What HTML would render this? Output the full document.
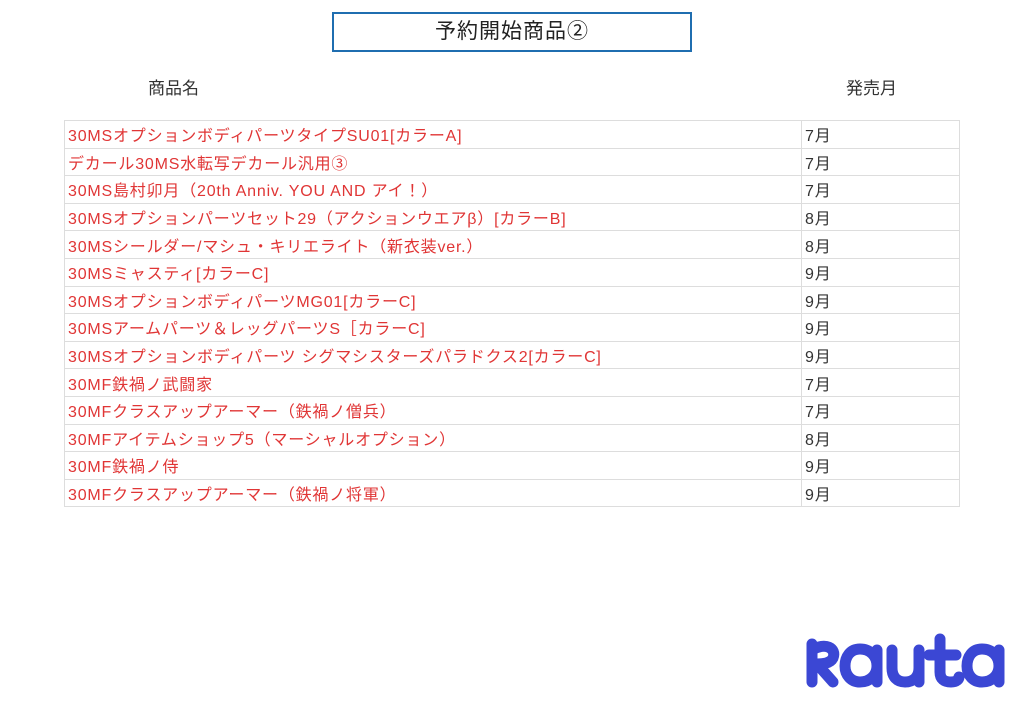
<!DOCTYPE html>
<html><head><meta charset="utf-8"><style>
body{margin:0;width:1024px;height:709px;background:#fff;position:relative;font-family:"Liberation Sans","Noto Sans CJK JP",sans-serif;overflow:hidden}
.title{position:absolute;left:332px;top:12px;width:356px;height:36px;border:2px solid #1f6eb0;text-align:center;font-size:21px;line-height:36px;color:#222;letter-spacing:1px}
.h{position:absolute;top:74px;font-size:17px;color:#333}
table{position:absolute;left:64px;top:120px;border-collapse:collapse;width:896px}
td{border:1px solid #ddd;height:26.6px;padding:0 0 0 3px;font-size:16px;color:#333;white-space:nowrap;letter-spacing:0.8px}
td:first-child{color:#e03535;width:733px}
</style></head><body>
<div class="title">予約開始商品②</div>
<div class="h" style="left:148px">商品名</div>
<div class="h" style="left:846px">発売月</div>
<table>
<tr><td>30MSオプションボディパーツタイプSU01[カラーA]</td><td>7月</td></tr>
<tr><td>デカール30MS水転写デカール汎用③</td><td>7月</td></tr>
<tr><td>30MS島村卯月（20th Anniv. YOU AND アイ！）</td><td>7月</td></tr>
<tr><td>30MSオプションパーツセット29（アクションウエアβ）[カラーB]</td><td>8月</td></tr>
<tr><td>30MSシールダー/マシュ・キリエライト（新衣装ver.）</td><td>8月</td></tr>
<tr><td>30MSミャスティ[カラーC]</td><td>9月</td></tr>
<tr><td>30MSオプションボディパーツMG01[カラーC]</td><td>9月</td></tr>
<tr><td>30MSアームパーツ＆レッグパーツS［カラーC]</td><td>9月</td></tr>
<tr><td>30MSオプションボディパーツ シグマシスターズパラドクス2[カラーC]</td><td>9月</td></tr>
<tr><td>30MF鉄禍ノ武闘家</td><td>7月</td></tr>
<tr><td>30MFクラスアップアーマー（鉄禍ノ僧兵）</td><td>7月</td></tr>
<tr><td>30MFアイテムショップ5（マーシャルオプション）</td><td>8月</td></tr>
<tr><td>30MF鉄禍ノ侍</td><td>9月</td></tr>
<tr><td>30MFクラスアップアーマー（鉄禍ノ将軍）</td><td>9月</td></tr>
</table>
<svg style="position:absolute;left:795px;top:630px" width="220" height="65" viewBox="0 0 220 65">
<g fill="none" stroke="#3b47d4" stroke-width="11" stroke-linecap="round" stroke-linejoin="round">
<path d="M17 52V14M17 20C30 12 42 18 38 28C35 34 26 34 22 34L38 52"/>
<path d="M82 20V52M82 36C82 26 75 19 65 19C55 19 50 27 50 36C50 45 56 52 65 52C75 52 82 45 82 36"/>
<path d="M97 20V38C97 47 102 52 110 52C118 52 124 47 124 38V20M124 30V52"/>
<path d="M145 9V42C145 49 149 52 156 52C162 52 164 49 164 47M134 25H161"/>
<path d="M204 20V52M204 36C204 26 197 19 187 19C177 19 172 27 172 36C172 45 178 52 187 52C197 52 204 45 204 36"/>
</g></svg>
</body></html>
